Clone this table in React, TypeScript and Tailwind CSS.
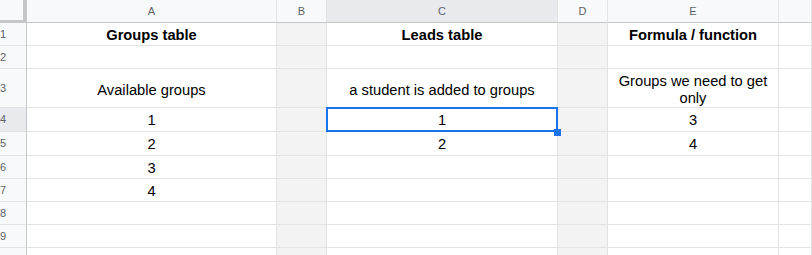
import React from 'react';

type Row = {
    n: number;
    h: string;
    a?: string;
    c?: string;
    e?: string;
    bold?: boolean;
};

const rows: Row[] = [
    { n: 1, h: 'h-[23px]', a: 'Groups table', c: 'Leads table', e: 'Formula / function', bold: true },
    { n: 2, h: 'h-[23px]' },
    { n: 3, h: 'h-[39px]', a: 'Available groups', c: 'a student is added to groups', e: 'Groups we need to get only' },
    { n: 4, h: 'h-[24px]', a: '1', c: '1', e: '3' },
    { n: 5, h: 'h-[24px]', a: '2', c: '2', e: '4' },
    { n: 6, h: 'h-[23px]', a: '3' },
    { n: 7, h: 'h-[23px]', a: '4' },
    { n: 8, h: 'h-[23px]' },
    { n: 9, h: 'h-[23px]' },
    { n: 10, h: 'h-[23px]' },
];

const SELECTED_ROW = 4;

const cols = ['A', 'B', 'C', 'D', 'E', ''];

const Cell: React.FC<{ text?: string; bold?: boolean; shaded?: boolean; selected?: boolean; tall?: boolean }> = ({ text, bold, shaded, selected, tall }) => (
    <div
        className={`relative flex items-center justify-center px-[3px] border-r border-b border-[#e2e3e3] text-center text-[14.7px] leading-[17px] text-black ${
            tall ? 'pt-[4px]' : 'pt-[2px]'
        } ${shaded ? 'bg-[#f3f3f3]' : 'bg-white'} ${bold ? 'font-bold' : ''}`}
    >
        {text}
        {selected && (
            <div className="absolute -left-[1px] -top-[1px] -right-[1px] -bottom-[1px] z-10 border-2 border-[#1a73e8]">
                <div className="absolute -right-[5px] -bottom-[6px] w-[7px] h-[7px] bg-[#1a73e8]" />
            </div>
        )}
    </div>
);

export default function App() {
    return (
        <div className="w-[812px] h-[255px] overflow-hidden bg-white font-['Liberation_Sans',Arial,sans-serif]">
            <div className="grid grid-cols-[27px_250px_50px_231px_50px_171px_1fr]">
                {/* column headers */}
                <div className="h-[23px] bg-[#f8f9fa] border-r-4 border-b-[3px] border-[#c4c7c5]" />
                {cols.map((c) => (
                    <div
                        key={c || 'f'}
                        className={`h-[23px] flex items-center justify-center border-r border-b border-r-[#e2e3e3] border-b-[#c4c7c5] text-[11px] text-[#5f6368] ${
                            c === 'C' ? 'bg-[#e8eaed]' : 'bg-[#f8f9fa]'
                        }`}
                    >
                        {c}
                    </div>
                ))}

                {rows.map((r) => (
                    <React.Fragment key={r.n}>
                        <div
                            className={`${r.h} flex items-center overflow-hidden border-r border-b border-r-[#c4c7c5] border-b-[#e2e3e3] text-[11px] text-[#5f6368] ${
                                r.n === SELECTED_ROW ? 'bg-[#e8eaed]' : 'bg-[#f8f9fa]'
                            }`}
                        >
                            <div className="w-[24px] shrink-0 -ml-[9px] text-center">{r.n}</div>
                        </div>
                        <Cell text={r.a} bold={r.bold} tall={r.n === 3} />
                        <Cell shaded />
                        <Cell text={r.c} bold={r.bold} tall={r.n === 3} selected={r.n === SELECTED_ROW} />
                        <Cell shaded />
                        <Cell text={r.e} bold={r.bold} tall={r.n === 3} />
                        <Cell />
                    </React.Fragment>
                ))}
            </div>
        </div>
    );
}
